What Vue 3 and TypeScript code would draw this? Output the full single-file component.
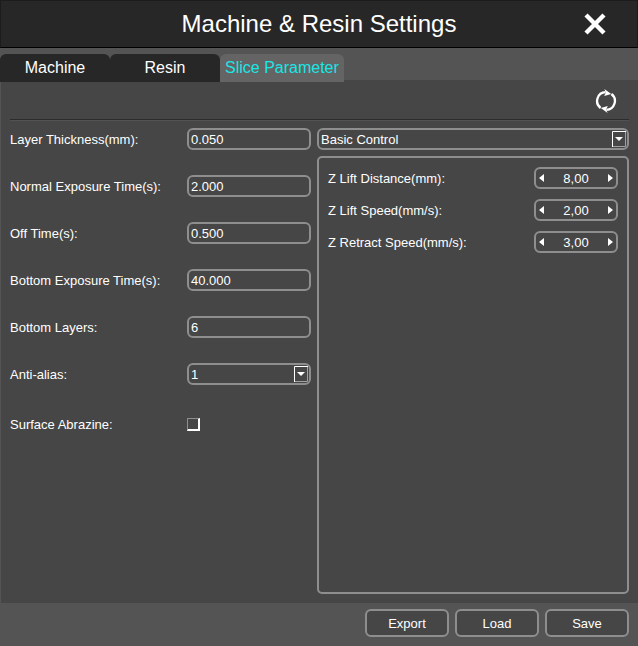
<script setup lang="ts">
import { ref } from 'vue'

interface Field {
  id: string
  label: string
  value: string
}

const tabs: string[] = ['Machine', 'Resin', 'Slice Parameter']
const activeTab = ref('Slice Parameter')

const fields = ref<Field[]>([
  { id: 'layer-thickness', label: 'Layer Thickness(mm):', value: '0.050' },
  { id: 'normal-exposure', label: 'Normal Exposure Time(s):', value: '2.000' },
  { id: 'off-time', label: 'Off Time(s):', value: '0.500' },
  { id: 'bottom-exposure', label: 'Bottom Exposure Time(s):', value: '40.000' },
  { id: 'bottom-layers', label: 'Bottom Layers:', value: '6' },
])

const motions = ref<Field[]>([
  { id: 'lift-distance', label: 'Z Lift Distance(mm):', value: '8,00' },
  { id: 'lift-speed', label: 'Z Lift Speed(mm/s):', value: '2,00' },
  { id: 'retract-speed', label: 'Z Retract Speed(mm/s):', value: '3,00' },
])

const antiAlias = ref('1')
const control = ref('Basic Control')
const abrazine = ref(false)
const actions: string[] = ['Export', 'Load', 'Save']

function step(item: Field, delta: number): void {
  const next = Math.max(0, parseFloat(item.value.replace(',', '.')) + delta)
  item.value = next.toFixed(2).replace('.', ',')
}
</script>

<template>
  <main class="dialog">
    <header class="titlebar">
      <h1>Machine &amp; Resin Settings</h1>
      <button class="icon-button close" type="button" aria-label="Close">
        <svg width="22" height="22" viewBox="0 0 22 22">
          <path d="M2 2L20 20M20 2L2 20" stroke="#fff" stroke-width="4.4" fill="none" />
        </svg>
      </button>
    </header>

    <nav class="tabs">
      <button
        v-for="tab in tabs"
        :key="tab"
        type="button"
        class="tab"
        :class="{ active: tab === activeTab }"
        @click="activeTab = tab"
      >{{ tab }}</button>
    </nav>

    <section class="content">
      <div class="toolbar">
        <button class="icon-button" type="button" aria-label="Reset">
          <svg width="22" height="24" viewBox="0 0 22 24">
            <g fill="none" stroke="#fff" stroke-width="2.3">
              <path d="M5.6 19A8.8 8.8 0 0 1 10.6 3.2" />
              <path d="M16.4 5A8.8 8.8 0 0 1 11.4 20.8" />
            </g>
            <path d="M9.4 0L16.2 5L9.2 7L10.8 3.6Z" fill="#fff" />
            <path d="M12.6 24L5.8 19L12.8 17L11.2 20.4Z" fill="#fff" />
          </svg>
        </button>
      </div>

      <div class="columns">
        <div class="form">
          <div v-for="field in fields" :key="field.id" class="row">
            <label :for="field.id">{{ field.label }}</label>
            <input :id="field.id" v-model="field.value" class="box" type="text" />
          </div>
          <div class="row">
            <label for="anti-alias">Anti-alias:</label>
            <div class="select">
              <select id="anti-alias" v-model="antiAlias" class="box">
                <option>1</option>
                <option>2</option>
                <option>4</option>
                <option>8</option>
              </select>
              <svg class="arrow" width="14" height="16" viewBox="0 0 14 16">
                <path d="M0 15.5H13.5V0" fill="none" stroke="#a0a0a0" />
                <path d="M.5 16V.5H14" fill="none" stroke="#fff" />
                <path d="M3 6H11L7 10Z" fill="#fff" />
              </svg>
            </div>
          </div>
          <div class="row check-row">
            <label for="abrazine">Surface Abrazine:</label>
            <input id="abrazine" v-model="abrazine" class="check" type="checkbox" />
          </div>
        </div>

        <div class="motion">
          <div class="select">
            <select v-model="control" class="box" aria-label="Control mode">
              <option>Basic Control</option>
              <option>Advance Control</option>
            </select>
            <svg class="arrow" width="14" height="16" viewBox="0 0 14 16">
              <path d="M0 15.5H13.5V0" fill="none" stroke="#a0a0a0" />
              <path d="M.5 16V.5H14" fill="none" stroke="#fff" />
              <path d="M3 6H11L7 10Z" fill="#fff" />
            </svg>
          </div>
          <div class="panel">
            <div v-for="item in motions" :key="item.id" class="motion-row">
              <label :for="item.id">{{ item.label }}</label>
              <div class="box spinner">
                <button type="button" aria-label="Decrease" @click="step(item, -1)">
                  <svg width="5" height="8" viewBox="0 0 5 8"><path d="M5 0V8L0 4Z" fill="#fff" /></svg>
                </button>
                <input :id="item.id" v-model="item.value" type="text" />
                <button type="button" aria-label="Increase" @click="step(item, 1)">
                  <svg width="5" height="8" viewBox="0 0 5 8"><path d="M0 0V8L5 4Z" fill="#fff" /></svg>
                </button>
              </div>
            </div>
          </div>
        </div>
      </div>
    </section>

    <footer class="footer">
      <button v-for="action in actions" :key="action" class="box action" type="button">{{ action }}</button>
    </footer>
  </main>
</template>

<style>
body {
  margin: 0;
  background: #545454;
}
</style>

<style scoped>
* {
  box-sizing: border-box;
}

.dialog {
  display: flex;
  flex-direction: column;
  min-height: 100vh;
  background: #545454;
  color: #fff;
  font-family: "Liberation Sans", Arial, sans-serif;
  font-size: 13px;
}

button,
input,
select {
  margin: 0;
  padding: 0;
  border: 0;
  background: none;
  color: inherit;
  font: inherit;
}

svg {
  display: block;
}

.titlebar {
  display: grid;
  grid-template-columns: 1fr auto 1fr;
  align-items: center;
  height: 48px;
  padding: 0 31px;
  border: 1px solid #1c1c1c;
  border-bottom-color: #000;
  background: #272727;
}

h1 {
  grid-column: 2;
  margin: 0;
  font-size: 24px;
  font-weight: 400;
  line-height: 28px;
}

.icon-button {
  display: block;
}

.close {
  justify-self: end;
}

.tabs {
  display: flex;
  height: 34px;
  padding-top: 6px;
  background: linear-gradient(#545454 32px, #464646 32px);
}

.tab {
  min-width: 110px;
  padding: 0 5px;
  border-radius: 6px 6px 0 0;
  background: #272727;
  font-size: 16px;
}

.tab.active {
  background: #646464;
  color: #1ae6e6;
}

.content {
  display: flex;
  flex: 1;
  flex-direction: column;
  padding: 0 9px 9px;
  border-left: 1px solid #545454;
  background: #464646;
}

.toolbar {
  display: flex;
  align-items: center;
  justify-content: flex-end;
  height: 38px;
  padding-right: 12px;
  border-bottom: 1px solid #2c2c2c;
  box-shadow: 0 1px #525252;
}

.columns {
  display: grid;
  flex: 1;
  grid-template-columns: 301fr 312fr;
  gap: 6px;
  padding-top: 8px;
}

.form {
  display: flex;
  flex-direction: column;
  gap: 25px;
}

.row {
  display: grid;
  grid-template-columns: 177px 1fr;
  align-items: center;
  height: 22px;
}

.check-row {
  margin-top: 3px;
}

.box {
  width: 100%;
  height: 22px;
  padding: 0 2px;
  border: 2px solid #8e8e8e;
  border-radius: 6px;
  background: #464646;
}

.select {
  position: relative;
}

select {
  display: block;
  appearance: none;
}

.arrow {
  position: absolute;
  top: 3px;
  right: 3px;
  pointer-events: none;
}

.check {
  width: 13px;
  height: 13px;
  appearance: none;
  border: 1px solid;
  border-width: 1px 2px 2px 1px;
  border-color: #8e8e8e #fff #fff #8e8e8e;
}

.check:checked {
  background: #1ae6e6;
}

.motion {
  display: flex;
  flex-direction: column;
  gap: 6px;
}

.panel {
  display: flex;
  flex: 1;
  flex-direction: column;
  gap: 10px;
  padding: 9px;
  border: 2px solid #8e8e8e;
  border-radius: 5px;
}

.motion-row {
  display: flex;
  align-items: center;
  justify-content: space-between;
}

.spinner {
  display: flex;
  align-items: center;
  width: 84px;
  padding: 0 3px;
}

.spinner input {
  flex: 1;
  min-width: 0;
  text-align: center;
}

.footer {
  display: flex;
  justify-content: flex-end;
  gap: 6px;
  padding: 6px 9px 9px;
}

.action {
  width: 84px;
  height: 28px;
}
</style>
